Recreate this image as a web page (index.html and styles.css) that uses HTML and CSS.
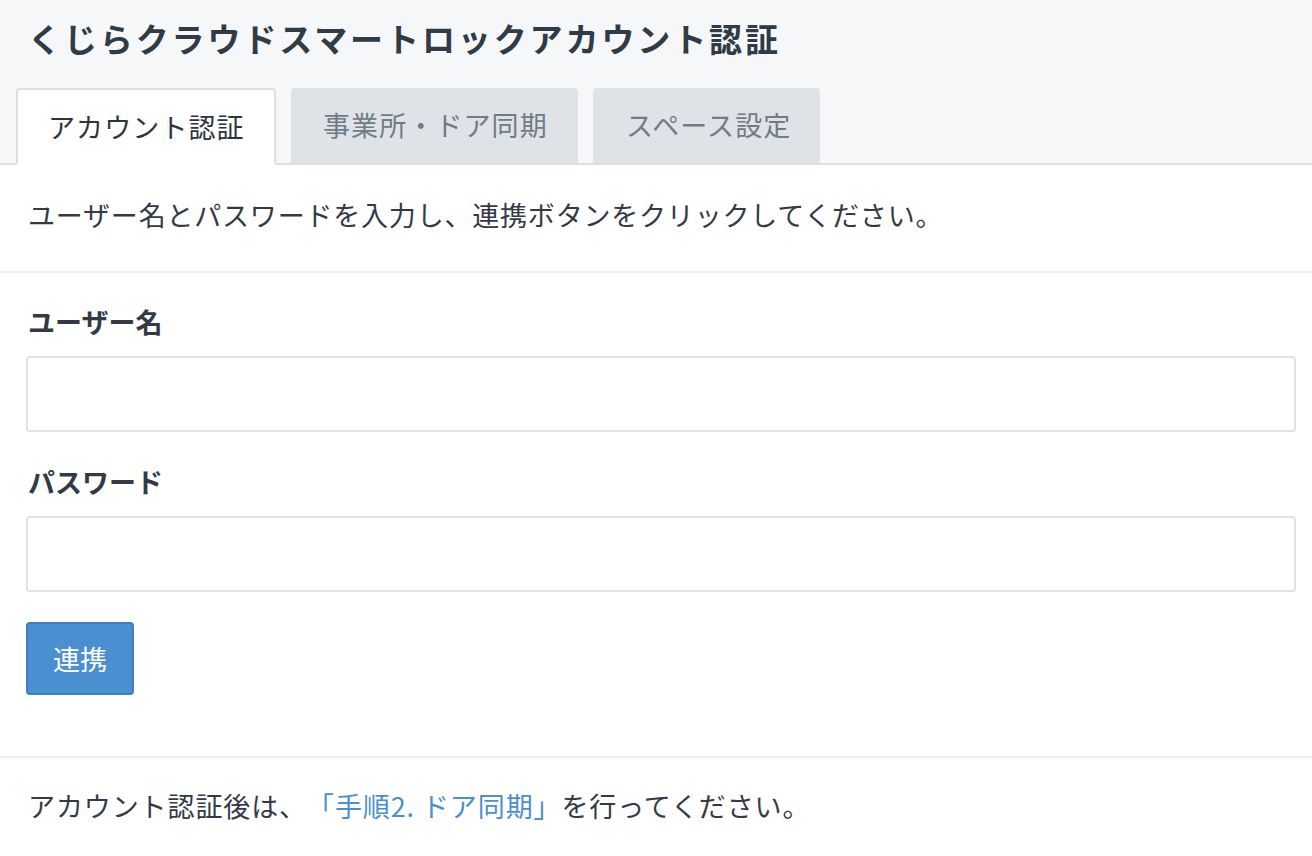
FILE: index.html
```html
<!DOCTYPE html>
<html lang="ja">
  <head>
    <meta charset="UTF-8" />
    <title>くじらクラウドスマートロックアカウント認証</title>
    <link rel="stylesheet" href="styles.css">
  </head>
  <body>
    <div class="top">
      <h1 class="title">くじらクラウドスマートロックアカウント認証</h1>
      <ul class="tabs">
        <li class="tab active">アカウント認証</li>
        <li class="tab">事業所・ドア同期</li>
        <li class="tab">スペース設定</li>
      </ul>
    </div>

    <p class="lead">ユーザー名とパスワードを入力し、連携ボタンをクリックしてください。</p>

    <form class="form">
      <label class="label" for="user">ユーザー名</label>
      <input class="field" id="user" type="text" />
      <label class="label" for="pass">パスワード</label>
      <input class="field" id="pass" type="password" />
      <button class="btn" type="button">連携</button>
    </form>

    <p class="note">アカウント認証後は、<a href="#">「手順2. ドア同期」</a>を行ってください。</p>
  </body>
</html>
```

FILE: styles.css
```css
* {
  padding: 0px;
  margin: 0px;
  box-sizing: border-box;
}
body {
  font-family: "Noto Sans CJK JP", "Noto Sans", sans-serif;
  color: #333a46;
  background: #fff;
  text-spacing-trim: space-all;
}
.top {
  background: #f6f7f9;
  border-bottom: 2px solid #dfdfdf;
  padding: 0px 16px;
}
.title {
  font-size: 33px;
  font-weight: bold;
  letter-spacing: 2.9px;
  color: #2f3b47;
  line-height: 40px;
  padding: 18px 0px 0px 12px;
  height: 88px;
}
.tabs {
  list-style: none;
  display: flex;
  gap: 15px;
  margin-bottom: -2px;
}
.tab {
  height: 77px;
  padding: 0px 30px;
  font-size: 27px;
  letter-spacing: 1.1px;
  line-height: 73px;
  color: #6f7b86;
  background: #dfe3e8;
  border-radius: 4px 4px 0px 0px;
  border-bottom: 2px solid #dfdfdf;
}
.tab:nth-child(2) {
  width: 287px;
  padding: 0px 0px 0px 32px;
}
.tab:nth-child(3) {
  width: 227px;
  padding: 0px 0px 0px 33px;
}
.tab.active {
  width: 260px;
  padding: 0px 0px 0px 30px;
  background: #fff;
  color: #2c3440;
  border: 2px solid #dfdfdf;
  border-bottom: 2px solid #fff;
}
.lead {
  font-size: 27px;
  letter-spacing: 0.8px;
  line-height: 40px;
  padding: 30px 28px 36px;
  border-bottom: 2px solid #eeeeee;
}
.form {
  display: flex;
  flex-direction: column;
  align-items: flex-start;
  padding: 29px 16px 61px 26px;
  border-bottom: 2px solid #eeeeee;
}
.label {
  font-size: 27px;
  font-weight: bold;
  line-height: 40px;
  margin-left: 2px;
  margin-bottom: 14px;
}
.field {
  width: 100%;
  height: 76px;
  border: 2px solid #e2e2e2;
  border-radius: 4px;
  margin-bottom: 31px;
  font-size: 27px;
  padding: 0px 16px;
}
.field + .label {
  margin-top: -1px;
}
.btn {
  width: 108px;
  height: 73px;
  margin-top: -1px;
  background: #4a8fd0;
  border: 2px solid #3f7fc0;
  border-radius: 4px;
  color: #fff;
  font-family: "Noto Sans CJK JP", "Noto Sans", sans-serif;
  font-size: 27px;
}
.note {
  font-size: 27px;
  letter-spacing: 0.9px;
  line-height: 40px;
  padding: 28px 28px;
}
.note a {
  color: #4a8fd0;
  text-decoration: none;
}
```
